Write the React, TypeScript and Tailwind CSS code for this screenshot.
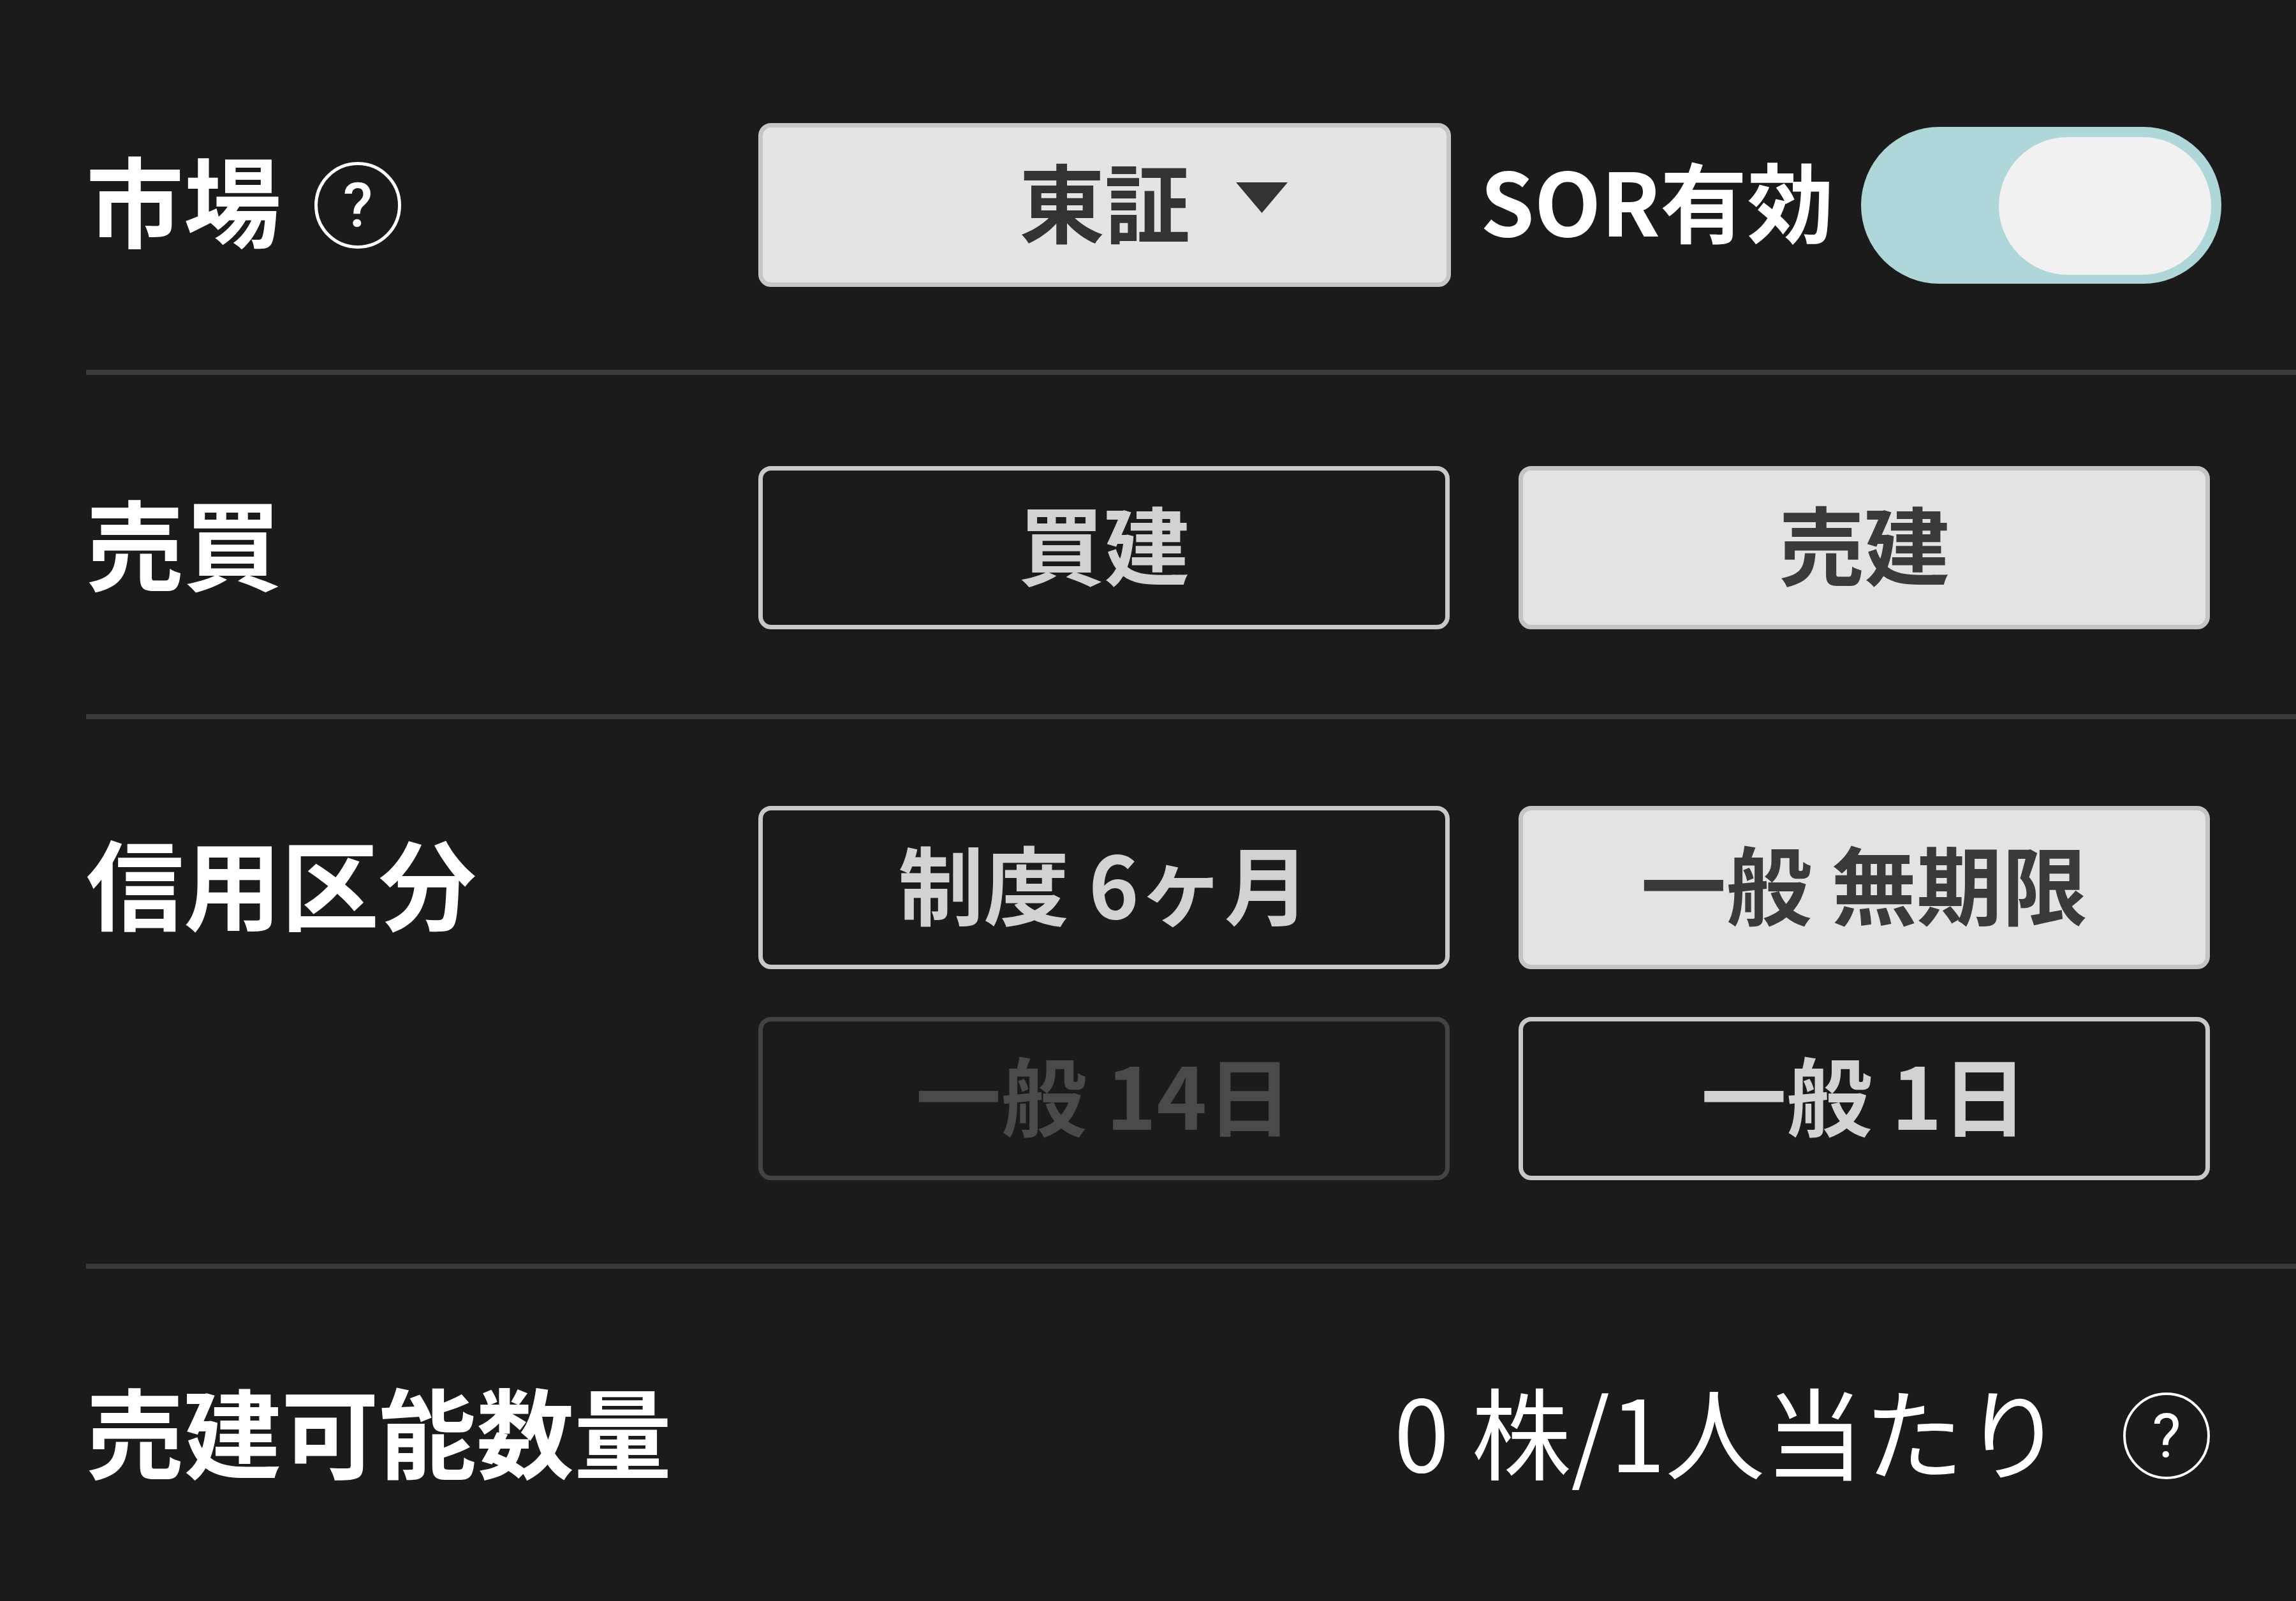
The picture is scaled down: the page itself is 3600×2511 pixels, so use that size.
import React from "react";

const jp = "font-['Noto_Sans_CJK_JP','Noto_Sans',sans-serif]";

const HelpIcon = ({ thin = false }: { thin?: boolean }) => (
  <span
    className={`inline-flex items-center justify-center w-[136px] h-[136px] rounded-full border-white ${
      thin ? "border-[4px]" : "border-[5px]"
    }`}
  >
    <span
      className={`font-['Roboto',sans-serif] text-[96px] leading-none text-white ${
        thin ? "font-normal" : "font-medium"
      }`}
    >
      ?
    </span>
  </span>
);

type Variant = "outline" | "filled" | "disabled";

const ChoiceButton = ({ label, variant }: { label: string; variant: Variant }) => {
  const styles: Record<Variant, string> = {
    outline: "border-[#c9c9c9] bg-[#1b1b1b] text-[#d2d2d2]",
    filled: "border-[#c4c4c4] bg-[#e3e3e3] text-[#3a3a3a]",
    disabled: "border-[#434343] bg-[#1b1b1b] text-[#4a4a4a]",
  };
  return (
    <div
      className={`h-[256px] flex items-center justify-center rounded-[20px] border-[7px] text-[134px] font-bold leading-none whitespace-pre ${styles[variant]}`}
    >
      <span className="pb-[18px]">{label}</span>
    </div>
  );
};

const Toggle = () => (
  <div className="relative w-[565px] h-[246px] rounded-full bg-[#afd6d8] -mr-[18px] shrink-0">
    <div className="absolute right-[16px] top-[16px] w-[333px] h-[216px] rounded-[108px] bg-[#f2f1f2]" />
  </div>
);

const Label = ({ children }: { children: React.ReactNode }) => (
  <span className="text-[153px] font-bold leading-none pb-[22px]">{children}</span>
);

export default function App() {
  return (
    <div className={`min-h-screen bg-[#1b1b1b] pl-[135px] text-white ${jp}`}>
      {/* 市場 */}
      <section className="flex items-center pt-[193px] pb-[130px] pr-[135px] border-b-[8px] border-[#393939]">
        <div className="w-[1054px] shrink-0 flex items-center">
          <Label>市場</Label>
          <span className="ml-[52px] flex">
            <HelpIcon />
          </span>
        </div>
        <div className="flex-1 flex items-center">
          <div className="w-[1086px] h-[257px] shrink-0 flex items-center justify-center rounded-[20px] border-[7px] border-[#c6c6c6] bg-[#e4e4e4]">
            <span className="relative text-[134px] font-bold leading-none text-[#333333] pb-[18px]">
              東証
              <svg
                className="absolute left-[calc(100%+72px)] top-[40px]"
                width="81"
                height="48"
                viewBox="0 0 81 48"
              >
                <polygon points="0,0 81,0 40.5,48" fill="#333333" />
              </svg>
            </span>
          </div>
          <span className="ml-[46px] text-[136px] font-bold leading-none pb-[20px]">SOR有効</span>
          <span className="ml-auto">
            <Toggle />
          </span>
        </div>
      </section>

      {/* 売買 */}
      <section className="flex items-center pt-[143px] pb-[133px] pr-[135px] border-b-[8px] border-[#393939]">
        <div className="w-[1054px] shrink-0 flex items-center">
          <Label>売買</Label>
        </div>
        <div className="flex-1 grid grid-cols-2 gap-[108px]">
          <ChoiceButton label="買建" variant="outline" />
          <ChoiceButton label="売建" variant="filled" />
        </div>
      </section>

      {/* 信用区分 */}
      <section className="flex items-start pt-[136px] pb-[131px] pr-[135px] border-b-[8px] border-[#393939]">
        <div className="w-[1054px] h-[256px] shrink-0 flex items-center">
          <Label>信用区分</Label>
        </div>
        <div className="flex-1 grid grid-cols-2 gap-x-[108px] gap-y-[75px]">
          <ChoiceButton label="制度 6ヶ月" variant="outline" />
          <ChoiceButton label="一般 無期限" variant="filled" />
          <ChoiceButton label="一般 14日" variant="disabled" />
          <ChoiceButton label="一般 1日" variant="outline" />
        </div>
      </section>

      {/* 売建可能数量 */}
      <section className="h-[524px] flex items-center pr-[135px]">
        <Label>売建可能数量</Label>
        <div className="ml-auto flex items-center">
          <span className="text-[156px] font-normal leading-none pb-[22px]">0 株/1人当たり</span>
          <span className="ml-[94px] flex">
            <HelpIcon thin />
          </span>
        </div>
      </section>
    </div>
  );
}
